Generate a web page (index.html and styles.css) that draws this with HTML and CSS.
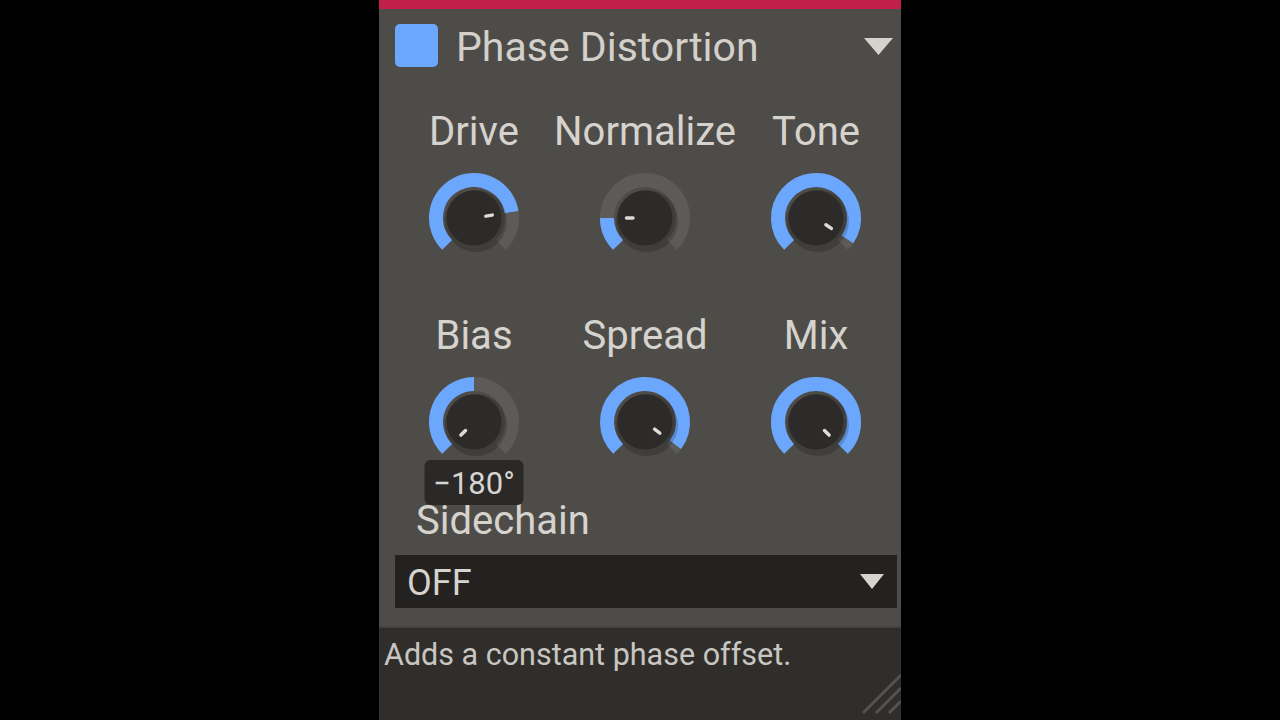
FILE: index.html
```html
<!DOCTYPE html>
<html lang="en">
<head>
  <meta charset="UTF-8">
  <title>Phase Distortion</title>
  <link rel="stylesheet" href="styles.css">
</head>
<body>
  <div class="panel">
    <div class="top-bar"></div>
    <div class="main">
      <div class="header">
        <div class="fx-swatch"></div>
        <h1 class="fx-title">Phase Distortion</h1>
        <svg class="header-arrow" width="29" height="17" viewBox="0 0 29 17"><polygon points="0,0 29,0 14.5,17" /></svg>
      </div>

      <div class="knob-grid" id="knob-grid">
        <!-- knobs rendered by the script below -->
      </div>

      <div class="sidechain">
        <div class="sidechain-label">Sidechain</div>
        <div class="select-box">
          <span class="select-value">OFF</span>
          <svg class="select-arrow" width="24" height="15" viewBox="0 0 24 15"><polygon points="0,0 24,0 12,15" /></svg>
        </div>
      </div>
    </div>

    <div class="info">
      <p class="info-text">Adds a constant phase offset.</p>
      <svg class="grip" width="40" height="42" viewBox="0 0 40 42">
        <line x1="40" y1="2" x2="2" y2="40" />
        <line x1="40" y1="15" x2="15" y2="40" />
        <line x1="40" y1="28" x2="28" y2="40" />
      </svg>
    </div>
  </div>

  <script>
    const knobs = [
      { label: 'Drive', value: 0.8 },
      { label: 'Normalize', value: 0.167 },
      { label: 'Tone', value: 0.96 },
      { label: 'Bias', value: 0, bipolar: true, tooltip: '\u2212180°' },
      { label: 'Spread', value: 0.97 },
      { label: 'Mix', value: 1 }
    ];

    const cx = 50, cy = 50;
    const ns = 'http://www.w3.org/2000/svg';

    // angle in degrees, clockwise from 12 o'clock
    const point = (r, a) => {
      const rad = a * Math.PI / 180;
      return [cx + r * Math.sin(rad), cy - r * Math.cos(rad)];
    };

    const arcPath = (r, a1, a2) => {
      const [x1, y1] = point(r, a1);
      const [x2, y2] = point(r, a2);
      const large = a2 - a1 > 180 ? 1 : 0;
      return `M ${x1.toFixed(2)} ${y1.toFixed(2)} A ${r} ${r} 0 ${large} 1 ${x2.toFixed(2)} ${y2.toFixed(2)}`;
    };

    const el = (name, attrs) => {
      const node = document.createElementNS(ns, name);
      Object.keys(attrs).forEach(k => node.setAttribute(k, attrs[k]));
      return node;
    };

    const grid = document.getElementById('knob-grid');

    knobs.forEach(knob => {
      const cell = document.createElement('div');
      cell.className = 'knob';

      const label = document.createElement('div');
      label.className = 'knob-label';
      label.textContent = knob.label;
      cell.appendChild(label);

      const svg = el('svg', { width: 100, height: 100, viewBox: '0 0 100 100', class: 'knob-svg' });
      const angle = -135 + 270 * knob.value;

      svg.appendChild(el('path', { d: arcPath(38, -135, 135), class: 'knob-track' }));

      let from = -135, to = angle;
      if (knob.bipolar) {
        from = Math.min(0, angle);
        to = Math.max(0, angle);
      }
      if (to - from > 0.5) {
        svg.appendChild(el('path', { d: arcPath(38, from, to), class: 'knob-value' }));
      }

      svg.appendChild(el('circle', { cx: cx + 2, cy: cy + 3, r: 31, class: 'knob-shadow' }));
      svg.appendChild(el('circle', { cx: cx, cy: cy, r: 27.5, class: 'knob-body' }));

      const [px1, py1] = point(12, angle);
      const [px2, py2] = point(18.5, angle);
      svg.appendChild(el('line', { x1: px1, y1: py1, x2: px2, y2: py2, class: 'knob-pointer' }));

      cell.appendChild(svg);

      if (knob.tooltip) {
        const tip = document.createElement('div');
        tip.className = 'knob-tooltip';
        tip.textContent = knob.tooltip;
        cell.appendChild(tip);
      }

      grid.appendChild(cell);
    });
  </script>
</body>
</html>
```

FILE: styles.css
```css
body {
  margin: 0;
  background-color: #000;
  font-family: Roboto, "Noto Sans", sans-serif;
  display: flex;
  justify-content: center;
  height: 720px;
  overflow: hidden;
}

.panel {
  width: 522px;
  height: 720px;
  display: flex;
  flex-direction: column;
  background-color: #4e4c48;
}

.top-bar {
  height: 9px;
  background-color: #c2204b;
}

.main {
  height: 619px;
  padding: 15px 0 0 16px;
  box-sizing: border-box;
  border-bottom: 2px solid #444240;
}

.header {
  display: flex;
  align-items: center;
  height: 43px;
  padding-right: 8px;
}

.fx-swatch {
  width: 43px;
  height: 43px;
  border-radius: 5px;
  background-color: #6ca7fe;
}

.fx-title {
  flex: 1;
  margin: 0 0 0 18px;
  padding-top: 3px;
  font-size: 41px;
  font-weight: 400;
  color: #d3d0cb;
  line-height: 47px;
}

.header-arrow {
  fill: #d6d3ce;
  margin-top: 2px;
}

.knob-grid {
  display: grid;
  grid-template-columns: repeat(3, 150px);
  column-gap: 21px;
  row-gap: 44px;
  margin: 41px 0 0 4px;
}

.knob {
  position: relative;
  display: flex;
  flex-direction: column;
  align-items: center;
}

.knob-label {
  font-size: 40px;
  line-height: 47px;
  color: #d6d3ce;
  white-space: nowrap;
}

.knob-svg {
  display: block;
  margin-top: 13px;
}

.knob-track {
  fill: none;
  stroke: #5d5b58;
  stroke-width: 14;
}

.knob-value {
  fill: none;
  stroke: #6ca7fe;
  stroke-width: 14;
}

.knob-shadow {
  fill: rgba(0, 0, 0, 0.18);
}

.knob-body {
  fill: #2c2b2a;
}

.knob-pointer {
  stroke: #dedbd6;
  stroke-width: 3.5;
  stroke-linecap: round;
}

.knob-tooltip {
  position: absolute;
  top: 148px;
  left: 50%;
  transform: translateX(-50%);
  width: 99px;
  height: 45px;
  border-radius: 6px;
  background-color: #2a2928;
  color: #d8d5d0;
  font-size: 31px;
  line-height: 47px;
  text-align: center;
}

.sidechain {
  margin-top: 25px;
}

.sidechain-label {
  font-size: 40px;
  line-height: 47px;
  color: #d6d3ce;
  padding-left: 21px;
}

.select-box {
  display: flex;
  align-items: center;
  justify-content: space-between;
  width: 502px;
  height: 53px;
  margin-top: 11px;
  padding: 0 13px 0 12px;
  box-sizing: border-box;
  background-color: #232221;
}

.select-value {
  font-size: 36px;
  color: #d6d3ce;
  padding-top: 2px;
}

.select-arrow {
  fill: #d6d3ce;
}

.info {
  flex: 1;
  display: flex;
  flex-direction: column;
  background-color: #2f2e2b;
  padding: 9px 0 8px 5px;
}

.info-text {
  margin: 0;
  font-size: 30.5px;
  line-height: 36px;
  color: #c9c6c1;
}

.grip {
  margin-top: auto;
  margin-bottom: -3px;
  align-self: flex-end;
}

.grip line {
  stroke: #55534f;
  stroke-width: 3;
}
```
